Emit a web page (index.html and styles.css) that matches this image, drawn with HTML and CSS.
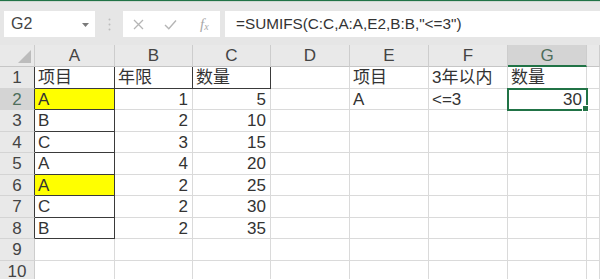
FILE: index.html
```html
<!DOCTYPE html>
<html lang="zh-CN">
<head>
    <meta charset="UTF-8">
    <meta name="viewport" content="width=device-width, initial-scale=1.0">
    <title>SUMIFS</title>
    <link rel="stylesheet" href="styles.css">
</head>
<body>
    <div class="topbar"></div>
    <div class="toolbar">
        <div class="namebox">
            <span>G2</span>
            <svg class="caret" width="7" height="4" viewBox="0 0 7 4"><path d="M0 0h7L3.5 4z" fill="#7a7a7a"/></svg>
        </div>
        <div class="grip">
            <svg width="3" height="13" viewBox="0 0 3 13"><circle cx="1.5" cy="1.5" r="1" fill="#bdbdbd"/><circle cx="1.5" cy="6.5" r="1" fill="#bdbdbd"/><circle cx="1.5" cy="11.5" r="1" fill="#bdbdbd"/></svg>
        </div>
        <div class="fbuttons">
            <svg width="11" height="11" viewBox="0 0 11 11"><path d="M1 1l9 9M10 1L1 10" stroke="#b5b5b5" stroke-width="1.3"/></svg>
            <svg width="13" height="11" viewBox="0 0 13 11"><path d="M1 6l3.8 3.8L12 1.5" stroke="#b5b5b5" stroke-width="1.4" fill="none"/></svg>
            <span class="fx">f<sub>x</sub></span>
        </div>
        <div class="formula">=SUMIFS(C:C,A:A,E2,B:B,"&lt;=3")</div>
    </div>

    <div class="sheet">
        <div class="ch corner"><span class="tri"></span></div>
        <div class="ch">A</div><div class="ch">B</div><div class="ch">C</div><div class="ch">D</div>
        <div class="ch">E</div><div class="ch">F</div><div class="ch sel">G</div><div class="ch"></div>

        <div class="rh edge">1</div>
        <div class="c b">项目</div><div class="c b">年限</div><div class="c b">数量</div><div class="c"></div>
        <div class="c">项目</div><div class="c">3年以内</div><div class="c">数量</div><div class="c"></div>

        <div class="rh edge sel">2</div>
        <div class="c b yellow">A</div><div class="c n">1</div><div class="c n">5</div><div class="c"></div>
        <div class="c">A</div><div class="c">&lt;=3</div><div class="c n active">30</div><div class="c"></div>

        <div class="rh edge">3</div>
        <div class="c b">B</div><div class="c n">2</div><div class="c n">10</div><div class="c"></div>
        <div class="c"></div><div class="c"></div><div class="c"></div><div class="c"></div>

        <div class="rh edge">4</div>
        <div class="c b">C</div><div class="c n">3</div><div class="c n">15</div><div class="c"></div>
        <div class="c"></div><div class="c"></div><div class="c"></div><div class="c"></div>

        <div class="rh edge">5</div>
        <div class="c b">A</div><div class="c n">4</div><div class="c n">20</div><div class="c"></div>
        <div class="c"></div><div class="c"></div><div class="c"></div><div class="c"></div>

        <div class="rh edge">6</div>
        <div class="c b yellow">A</div><div class="c n">2</div><div class="c n">25</div><div class="c"></div>
        <div class="c"></div><div class="c"></div><div class="c"></div><div class="c"></div>

        <div class="rh edge">7</div>
        <div class="c b">C</div><div class="c n">2</div><div class="c n">30</div><div class="c"></div>
        <div class="c"></div><div class="c"></div><div class="c"></div><div class="c"></div>

        <div class="rh edge">8</div>
        <div class="c b">B</div><div class="c n">2</div><div class="c n">35</div><div class="c"></div>
        <div class="c"></div><div class="c"></div><div class="c"></div><div class="c"></div>

        <div class="rh">9</div>
        <div class="c"></div><div class="c"></div><div class="c"></div><div class="c"></div>
        <div class="c"></div><div class="c"></div><div class="c"></div><div class="c"></div>

        <div class="rh">10</div>
        <div class="c"></div><div class="c"></div><div class="c"></div><div class="c"></div>
        <div class="c"></div><div class="c"></div><div class="c"></div><div class="c"></div>
    </div>
</body>
</html>
```

FILE: styles.css
```css
body { margin: 0; background: #fff; font-family: "Liberation Sans", "Noto Sans CJK SC", sans-serif; color: #333; overflow: hidden; }

.topbar { height: 2px; background: #217346; border-bottom: 1px solid #cfd8d2; box-sizing: border-box; }

.toolbar { display: flex; align-items: stretch; background: #e6e6e6; padding: 9px 0 8px 4px; height: 26px; }
.namebox { width: 91px; background: #fff; display: flex; align-items: center; justify-content: space-between; padding: 0 6px 0 7px; box-sizing: border-box; font-size: 16px; color: #444; }
.caret { margin-top: 1px; }
.grip { width: 28px; display: flex; align-items: center; justify-content: center; }
.fbuttons { width: 97px; background: #fff; display: flex; align-items: center; padding-left: 10px; gap: 20px; box-sizing: border-box; }
.fx { font-family: "Liberation Serif", serif; font-style: italic; color: #a8a8a8; font-size: 15px; margin-left: 3px; }
.fx sub { font-size: 10px; vertical-align: -1px; }
.formula { flex: 1; margin-left: 5px; background: #fff; padding-left: 11px; font-size: 15.3px; line-height: 26px; color: #333; }

.sheet { display: grid; grid-template-columns: 35px 80px 78px 78px 79px 79px 79px 79px 1fr; grid-template-rows: 22px repeat(10, 21.5px); font-size: 17px; }

.ch { background: #e9e9e9; border-right: 1px solid #cdcdcd; border-bottom: 1px solid #c6c6c6; box-sizing: border-box; color: #444; text-align: center; line-height: 22px; }
.ch.sel { background: #d4d4d4; border-bottom: 2px solid #217346; color: #4d6e5b; }
.corner { position: relative; }
.tri { position: absolute; right: 3px; bottom: 3px; width: 0; height: 0; border-left: 13px solid transparent; border-bottom: 13px solid #bcbcbc; }

.rh { background: #e9e9e9; border-right: 1px solid #cdcdcd; border-bottom: 1px solid #d4d4d4; box-sizing: border-box; color: #444; text-align: center; line-height: 21px; }
.rh.edge { border-right-color: #3a3a3a; }
.rh.sel { background: #d4d4d4; color: #4d6e5b; }

.c { border-right: 1px solid #dadada; border-bottom: 1px solid #dadada; box-sizing: border-box; padding: 0 3px; line-height: 21px; white-space: nowrap; overflow: hidden; }
.c.n { text-align: right; padding-right: 4px; }
.c.b { border-right-color: #3a3a3a; border-bottom-color: #3a3a3a; }
.yellow { background: #ffff00; }

.active { position: relative; overflow: visible; outline: 2px solid #217346; outline-offset: -1px; z-index: 1; }
.active::after { content: ""; position: absolute; right: -3px; bottom: -3px; width: 5px; height: 5px; background: #217346; border: 1px solid #fff; }
```
